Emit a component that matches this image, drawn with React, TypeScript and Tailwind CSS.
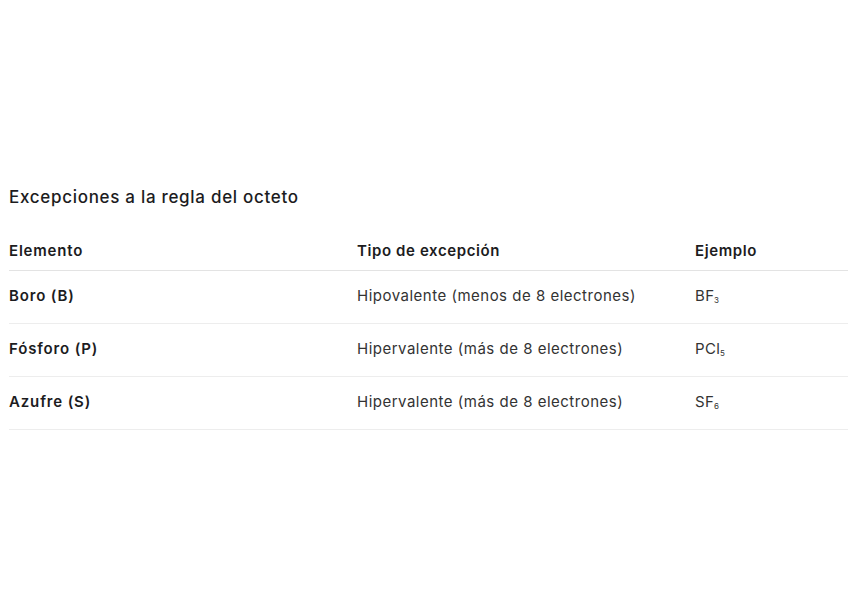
import React from "react";

const rows = [
  { el: "Boro (B)", tipo: "Hipovalente (menos de 8 electrones)", ej: "BF", sub: "3" },
  { el: "Fósforo (P)", tipo: "Hipervalente (más de 8 electrones)", ej: "PCl", sub: "5" },
  { el: "Azufre (S)", tipo: "Hipervalente (más de 8 electrones)", ej: "SF", sub: "6" },
];

export default function App() {
  return (
    <div className="w-[848px] h-[599px] bg-white pt-[185px] pl-[9px] font-['Inter',sans-serif] text-[#1c1c1e]">
      <h2 className="text-[17px] leading-[24px] font-medium tracking-[0.7px] text-[#1c1c1e]">
        Excepciones a la regla del octeto
      </h2>
      <table className="mt-[23px] w-[839px] border-collapse text-left">
        <thead>
          <tr className="h-[38px] border-b border-[#e3e3e3]">
            <th className="w-[348px] p-0 text-[15px] font-semibold tracking-[0.8px] align-middle">Elemento</th>
            <th className="w-[338px] p-0 text-[15px] font-semibold tracking-[0.6px] align-middle">Tipo de excepción</th>
            <th className="p-0 text-[15px] font-semibold tracking-[0.6px] align-middle">Ejemplo</th>
          </tr>
        </thead>
        <tbody>
          {rows.map((r) => (
            <tr key={r.el} className="h-[53px] border-b border-[#ededed]">
              <td className="p-0 text-[15px] font-semibold tracking-[0.85px] align-middle">{r.el}</td>
              <td className="p-0 text-[15px] tracking-[0.5px] text-[#333] align-middle">{r.tipo}</td>
              <td className="p-0 text-[15px] text-[#333] align-middle">
                <span className="tracking-[0.4px]">{r.ej.slice(0, -1)}</span>
                <span>{r.ej.slice(-1)}</span>
                <span className="text-[8px] align-baseline relative top-[2px]">{r.sub}</span>
              </td>
            </tr>
          ))}
        </tbody>
      </table>
    </div>
  );
}
